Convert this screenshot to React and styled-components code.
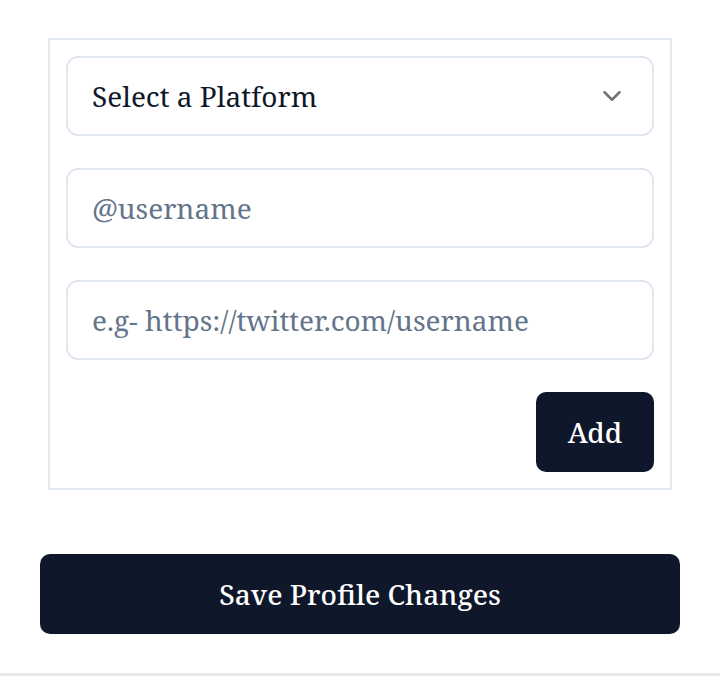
import React from 'react'
import styled, { createGlobalStyle } from 'styled-components'

const GlobalStyle = createGlobalStyle`
    html, body {
        margin: 0;
        padding: 0;
        background: #ffffff;
    }
    * {
        box-sizing: border-box;
    }
`;

const App = () => {
    return (
        <Page>
            <GlobalStyle />
            <Content>
                <LinkBox>
                    <SelectWrap>
                        <Select defaultValue="">
                            <option value="" disabled>Select a Platform</option>
                            <option value="twitter">Twitter</option>
                            <option value="github">GitHub</option>
                            <option value="linkedin">LinkedIn</option>
                        </Select>
                        <Chevron viewBox="0 0 24 24">
                            <path d="M6 9l6 6 6-6" />
                        </Chevron>
                    </SelectWrap>
                    <Input placeholder="@username" />
                    <Input placeholder="e.g- https://twitter.com/username" />
                    <Actions>
                        <AddButton>Add</AddButton>
                    </Actions>
                </LinkBox>
                <SaveButton>Save Profile Changes</SaveButton>
            </Content>
        </Page>
    )
}

export default App

const Page = styled.div`
    width: 720px;
    height: 676px;
    border-bottom: 3px solid #e5e7eb;
    font-family: "Noto Serif", "DejaVu Serif", serif;
`;

const Content = styled.div`
    display: flex;
    flex-direction: column;
    gap: 64px;
    padding: 38px 40px 0;
`;

const LinkBox = styled.div`
    display: flex;
    flex-direction: column;
    gap: 32px;
    margin: 0 8px;
    padding: 16px;
    border: 2px solid #e2e8f0;
`;

const SelectWrap = styled.div`
    position: relative;
`;

const fieldStyles = `
    width: 100%;
    height: 80px;
    padding: 0 24px;
    border: 2px solid #e2e8f0;
    border-radius: 12px;
    background: #ffffff;
    font-family: "Noto Serif", "DejaVu Serif", serif;
    font-size: 28px;
    outline: none;
`;

const Select = styled.select`
    ${fieldStyles}
    appearance: none;
    color: #0f172a;
`;

const Chevron = styled.svg`
    position: absolute;
    right: 27px;
    top: 50%;
    width: 30px;
    height: 30px;
    transform: translateY(-50%);
    fill: none;
    stroke: #71717a;
    stroke-width: 2;
    stroke-linecap: round;
    stroke-linejoin: round;
    pointer-events: none;
`;

const Input = styled.input`
    ${fieldStyles}
    color: #0f172a;

    &::placeholder {
        color: #64748b;
    }
`;

const Actions = styled.div`
    display: flex;
    justify-content: flex-end;
`;

const darkButton = `
    height: 80px;
    border: none;
    border-radius: 10px;
    background: #0f172a;
    color: #ffffff;
    font-family: "Noto Serif", "DejaVu Serif", serif;
    font-size: 28px;
    font-weight: 500;
    cursor: pointer;
`;

const AddButton = styled.button`
    ${darkButton}
    width: 118px;
`;

const SaveButton = styled.button`
    ${darkButton}
    width: 100%;
`;
